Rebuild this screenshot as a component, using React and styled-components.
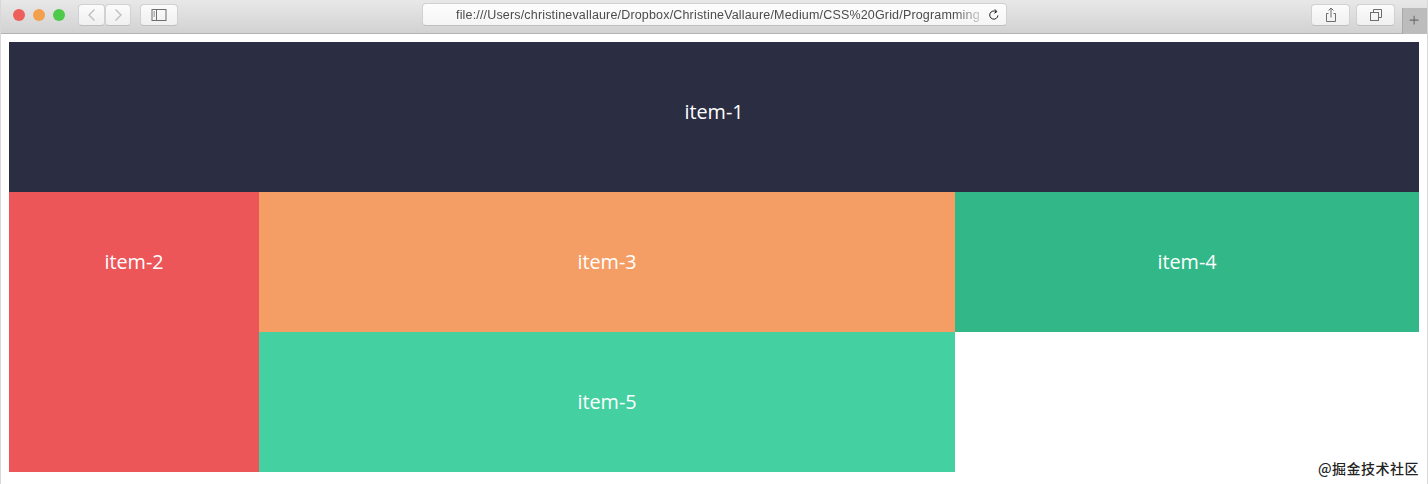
import React from "react";
import styled, { createGlobalStyle } from "styled-components";

const GlobalStyle = createGlobalStyle`
  html, body {
    margin: 0;
    padding: 0;
    background: #fff;
  }
`;

const Browser = styled.div`
  position: relative;
  width: 1428px;
  height: 484px;
  overflow: hidden;
  background: #fff;
  border-left: 1px solid #d8d8d8;
  border-right: 1px solid #d8d8d8;
  box-sizing: border-box;
`;

const Toolbar = styled.header`
  display: flex;
  align-items: flex-start;
  height: 34px;
  box-sizing: border-box;
  padding: 4px 0 0 12px;
  background: linear-gradient(#e9e8e9, #d3d2d3);
  border-bottom: 1px solid #b4b3b4;
`;

const Lights = styled.div`
  display: flex;
  gap: 8px;
  margin-top: 5px;
  margin-right: 13px;
`;

const Light = styled.span`
  width: 12px;
  height: 12px;
  border-radius: 50%;
  background: ${(p) => p.$color};
`;

const ToolButton = styled.button`
  display: flex;
  align-items: center;
  justify-content: center;
  width: ${(p) => p.$width}px;
  height: 22px;
  margin: 0 0 0 ${(p) => p.$left || 0}px;
  padding: 0;
  background: linear-gradient(#fbfbfb, #f1f0f1);
  border: 1px solid #d2d1d2;
  border-bottom-color: #c0bfc0;
  border-radius: 4px;
  box-sizing: border-box;
  color: #6d6d6d;
`;

const AddressBar = styled.div`
  display: flex;
  align-items: center;
  justify-content: space-between;
  width: 585px;
  height: 23px;
  margin-top: -1px;
  margin-left: 244px;
  padding: 0 5px 0 33px;
  box-sizing: border-box;
  background: linear-gradient(#fdfdfd, #f5f5f5);
  border: 1px solid #d2d1d2;
  border-bottom-color: #c0bfc0;
  border-radius: 4px;
`;

const Url = styled.span`
  white-space: nowrap;
  font: 12.5px "Liberation Sans", Arial, sans-serif;
  letter-spacing: 0.17px;
  color: #4c4c4c;
  -webkit-mask-image: linear-gradient(to right, #000 95%, rgba(0, 0, 0, 0.25) 100%);
  mask-image: linear-gradient(to right, #000 95%, rgba(0, 0, 0, 0.25) 100%);
`;

const NewTab = styled.div`
  display: flex;
  align-items: center;
  justify-content: center;
  width: 25px;
  height: 26px;
  margin-top: 4px;
  margin-left: 7px;
  background: #bdbcbd;
  border-left: 1px solid #aaa9aa;
  box-sizing: border-box;
  color: #6a6a6a;
`;

const Page = styled.main`
  padding: 8px 8px 0;
`;

const Grid = styled.section`
  display: grid;
  grid-template-columns: 250px 696px 464px;
  grid-template-rows: 150px 140px 140px;
  grid-template-areas:
    "one one one"
    "two three four"
    "two five .";
`;

const Item = styled.div`
  grid-area: ${(p) => p.$area};
  background: ${(p) => p.$bg};
  padding-top: 58px;
  box-sizing: border-box;
  text-align: center;
  font: 19.8px/24px "Open Sans", sans-serif;
  color: #fff;
`;

const Watermark = styled.div`
  position: absolute;
  right: 8px;
  bottom: 8px;
  font: 500 14px/16px "Noto Sans CJK SC", sans-serif;
  letter-spacing: 0.5px;
  color: #222;
`;

const Icon = ({ size = 16, children }) => (
  <svg
    width={size}
    height={size}
    viewBox="0 0 16 16"
    fill="none"
    stroke="currentColor"
    strokeWidth="1"
  >
    {children}
  </svg>
);

export default function App() {
  return (
    <>
      <GlobalStyle />
      <Browser>
        <Toolbar>
          <Lights>
            <Light $color="#ec5f5a" />
            <Light $color="#f3a04e" />
            <Light $color="#4fc94a" />
          </Lights>
          <ToolButton $width={27}>
            <Icon>
              <path d="M10.5 2.5 5 8l5.5 5.5" stroke="#bdbdbd" strokeWidth="1.3" />
            </Icon>
          </ToolButton>
          <ToolButton $width={26}>
            <Icon>
              <path d="M5.5 2.5 11 8l-5.5 5.5" stroke="#bdbdbd" strokeWidth="1.3" />
            </Icon>
          </ToolButton>
          <ToolButton $width={38} $left={9}>
            <Icon>
              <rect x="1" y="2.5" width="14" height="11" />
              <path d="M5.5 2.5v11M2.5 5h1.5M2.5 7h1.5M2.5 9h1.5" />
            </Icon>
          </ToolButton>
          <AddressBar>
            <Url>file:///Users/christinevallaure/Dropbox/ChristineVallaure/Medium/CSS%20Grid/Programming</Url>
            <Icon size={14}>
              <path d="M12.5 8.5a4.7 4.7 0 1 1-2-4.3" />
              <path d="M9 1.5l2.2 2.7L8.4 6" />
            </Icon>
          </AddressBar>
          <ToolButton $width={39} $left={304}>
            <Icon>
              <path d="M5.5 6.5H3.5v8h9v-8h-2" />
              <path d="M8 10.5V1M5.5 3.5 8 1l2.5 2.5" />
            </Icon>
          </ToolButton>
          <ToolButton $width={39} $left={6}>
            <Icon>
              <rect x="2.5" y="5.5" width="8" height="8" />
              <path d="M5.5 5.5v-3h8v8h-3" />
            </Icon>
          </ToolButton>
          <NewTab>
            <Icon size={14}>
              <path d="M7 2v10M2 7h10" strokeWidth="1.2" />
            </Icon>
          </NewTab>
        </Toolbar>
        <Page>
          <Grid>
            <Item $area="one" $bg="#2b2d42">item-1</Item>
            <Item $area="two" $bg="#ec5659">item-2</Item>
            <Item $area="three" $bg="#f49e65">item-3</Item>
            <Item $area="four" $bg="#32b888">item-4</Item>
            <Item $area="five" $bg="#45d0a2">item-5</Item>
          </Grid>
        </Page>
        <Watermark>@掘金技术社区</Watermark>
      </Browser>
    </>
  );
}
